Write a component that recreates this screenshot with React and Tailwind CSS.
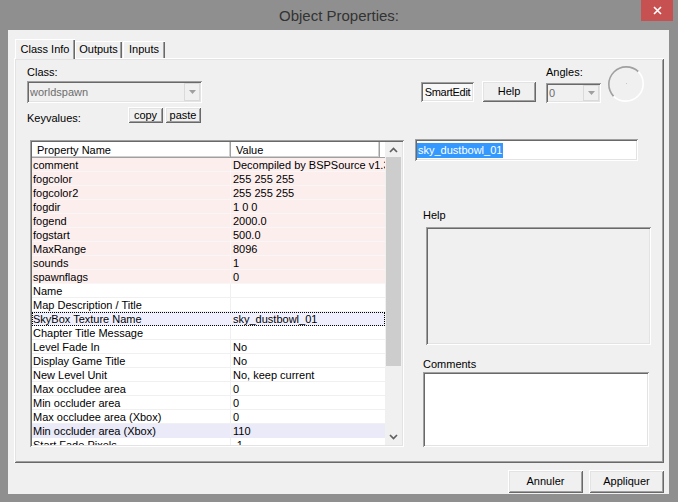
import React from 'react';

const raised = 'shadow-[inset_1px_1px_#ffffff,inset_-1px_-1px_#696969,inset_2px_2px_#e3e3e3,inset_-2px_-2px_#a0a0a0]';
const sunken = 'shadow-[inset_1px_1px_#a0a0a0,inset_-1px_-1px_#ffffff,inset_2px_2px_#696969,inset_-2px_-2px_#e3e3e3]';

const rows = [
  { name: 'comment', value: 'Decompiled by BSPSource v1.3', tint: 'pink' },
  { name: 'fogcolor', value: '255 255 255', tint: 'pink' },
  { name: 'fogcolor2', value: '255 255 255', tint: 'pink' },
  { name: 'fogdir', value: '1 0 0', tint: 'pink' },
  { name: 'fogend', value: '2000.0', tint: 'pink' },
  { name: 'fogstart', value: '500.0', tint: 'pink' },
  { name: 'MaxRange', value: '8096', tint: 'pink' },
  { name: 'sounds', value: '1', tint: 'pink' },
  { name: 'spawnflags', value: '0', tint: 'pink' },
  { name: 'Name', value: '' },
  { name: 'Map Description / Title', value: '' },
  { name: 'SkyBox Texture Name', value: 'sky_dustbowl_01', tint: 'selected' },
  { name: 'Chapter Title Message', value: '' },
  { name: 'Level Fade In', value: 'No' },
  { name: 'Display Game Title', value: 'No' },
  { name: 'New Level Unit', value: 'No, keep current' },
  { name: 'Max occludee area', value: '0' },
  { name: 'Min occluder area', value: '0' },
  { name: 'Max occludee area (Xbox)', value: '0' },
  { name: 'Min occluder area (Xbox)', value: '110', tint: 'hover' },
  { name: 'Start Fade Pixels', value: '-1' },
];

const rowBg = {
  pink: 'bg-[#fdeeee] border-[#f8f6f6]',
  selected: 'bg-[#eeeefc] border-[#eeeefc] outline-1 outline-dotted outline-black -outline-offset-1',
  hover: 'bg-[#eaeaf8] border-[#eaeaf8]',
};

const DropArrow = ({ color = '#a0a0a0' }) => (
  <svg width="7" height="4" viewBox="0 0 7 4">
    <path d="M0 0 L7 0 L3.5 4 Z" fill={color} />
  </svg>
);

const Chevron = ({ up }) => (
  <svg width="9" height="6" viewBox="0 0 9 6">
    <polyline
      points={up ? '1,5 4.5,1.5 8,5' : '1,1 4.5,4.5 8,1'}
      fill="none"
      stroke="#606060"
      strokeWidth="1.7"
    />
  </svg>
);

const Combo = ({ text, width }) => (
  <div className={`${width} h-full bg-[#f0f0f0] ${sunken} flex items-center`}>
    <span className="pl-[3px] text-[#6d6d6d]">{text}</span>
    <div className="ml-auto mr-[2px] w-[16px] h-[calc(100%-4px)] bg-[#f0f0f0] border border-[#dadada] flex items-center justify-center">
      <DropArrow />
    </div>
  </div>
);

const Dial = () => (
  <svg width="38" height="38" viewBox="0 0 38 38">
    <path d="M6.63 31.37 A17.5 17.5 0 0 1 31.37 6.63" fill="none" stroke="#a0a0a0" strokeWidth="1.6" />
    <path d="M31.37 6.63 A17.5 17.5 0 0 1 6.63 31.37" fill="none" stroke="#ffffff" strokeWidth="1.6" />
    <rect x="19" y="18" width="1" height="1" fill="#c8c8c8" />
  </svg>
);

const PropertyList = () => (
  <div className={`ml-[3px] mt-[17px] w-[374px] h-[307px] bg-white ${sunken} p-[2px]`}>
    <div className="flex h-full overflow-hidden">
      <div className="w-[353px] flex flex-col overflow-hidden">
        <div className="flex h-[16px] shrink-0">
          <div className="w-[199px] pl-[5px] flex items-center bg-white shadow-[inset_-1px_-1px_#a0a0a0,inset_-2px_-2px_#d0d0d0]">
            Property Name
          </div>
          <div className="w-[149px] pl-[5px] flex items-center bg-white shadow-[inset_-1px_-1px_#a0a0a0,inset_-2px_-2px_#d0d0d0]">
            Value
          </div>
          <div className="flex-1 bg-white shadow-[inset_0_-1px_#a0a0a0]" />
        </div>
        <div className="flex flex-col">
          {rows.map((r) => (
            <div
              key={r.name}
              className={`flex h-[14px] shrink-0 border-b ${r.tint ? rowBg[r.tint] : 'bg-white border-[#f0f0f0]'}`}
            >
              <div className={`w-[199px] pl-[1px] leading-[13px] whitespace-nowrap overflow-hidden border-r ${r.tint === 'pink' ? 'border-[#f8f6f6]' : 'border-[#f0f0f0]'}`}>
                <span className="relative top-[1px]">{r.name}</span>
              </div>
              <div className="flex-1 pl-[2px] leading-[13px] whitespace-nowrap overflow-hidden">
                <span className="relative top-[1px]">{r.value}</span>
              </div>
            </div>
          ))}
        </div>
      </div>
      <div className="w-[17px] flex flex-col bg-[#f0f0f0]">
        <div className="h-[15px] flex items-center justify-center shrink-0">
          <Chevron up />
        </div>
        <div className="mx-auto w-[15px] h-[209px] bg-[#cdcdcd] shrink-0" />
        <div className="flex-1" />
        <div className="h-[17px] flex items-center justify-center shrink-0">
          <Chevron />
        </div>
      </div>
    </div>
  </div>
);

export default function App() {
  return (
    <div className="w-[678px] h-[502px] bg-[#8f8f8f] flex flex-col font-['Liberation_Sans',Arial,sans-serif] text-[11px] text-black overflow-hidden">
      {/* title bar */}
      <div className="relative h-[30px] shrink-0 flex items-center justify-center">
        <span className="text-[15px] text-[#333333] mt-[2px]">Object Properties:</span>
        <div className="absolute right-[5px] top-0 w-[32px] h-[21px] bg-[#c75050] flex items-center justify-center">
          <svg width="9" height="9" viewBox="0 0 9 9">
            <path d="M1 1 L8 8 M8 1 L1 8" stroke="#ffffff" strokeWidth="1.6" />
          </svg>
        </div>
      </div>

      {/* client area */}
      <div className="ml-[8px] w-[661px] h-[464px] bg-[#f0f0f0] flex flex-col">
        {/* tabs */}
        <div className="h-[28px] pl-[7px] flex items-end shrink-0">
          <div className="relative z-10 -mb-[1px] w-[60px] h-[20px] bg-[#f0f0f0] shadow-[inset_1px_1px_#ffffff,inset_-1px_0_#696969,inset_-2px_0_#a0a0a0] flex items-center justify-center">
            Class Info
          </div>
          <div className="w-[47px] h-[17px] shadow-[inset_1px_1px_#ffffff,inset_-1px_0_#696969,inset_-2px_0_#a0a0a0] flex items-center justify-center">
            Outputs
          </div>
          <div className="ml-[1px] w-[42px] h-[17px] shadow-[inset_1px_1px_#ffffff,inset_-1px_0_#696969,inset_-2px_0_#a0a0a0] flex items-center justify-center">
            Inputs
          </div>
        </div>

        {/* tab panel */}
        <div className={`ml-[6px] w-[650px] h-[405px] shrink-0 flex ${raised}`}>
          {/* left column */}
          <div className="ml-[13px] w-[375px] pt-[8px] flex flex-col">
            <div className="h-[12px] leading-[12px]">Class:</div>
            <div className="mt-[3px] h-[22px]">
              <Combo text="worldspawn" width="w-[175px]" />
            </div>
            <div className="mt-[4px] h-[16px] flex">
              <span className="w-[101px] self-end leading-[12px] -mb-[1px]">Keyvalues:</span>
              <div className={`w-[35px] h-[16px] bg-[#f0f0f0] ${raised} flex items-center justify-center`}>copy</div>
              <div className={`ml-[2px] w-[36px] h-[16px] bg-[#f0f0f0] ${raised} flex items-center justify-center`}>paste</div>
            </div>
            <PropertyList />
          </div>

          {/* right column */}
          <div className="ml-[13px] flex-1 pt-[7px] flex flex-col">
            <div className="h-[38px] flex items-start">
              <div className={`ml-[6px] mt-[17px] w-[53px] h-[20px] bg-[#f8f8f8] ${sunken} flex items-center justify-center tracking-[-0.3px]`}>
                SmartEdit
              </div>
              <div className={`ml-[8px] mt-[16px] w-[54px] h-[21px] bg-[#f0f0f0] ${raised} flex items-center justify-center`}>
                Help
              </div>
              <div className="ml-[10px] flex flex-col">
                <div className="mt-[1px] h-[12px] leading-[12px]">Angles:</div>
                <div className="mt-[5px] h-[20px]">
                  <Combo text="0" width="w-[55px]" />
                </div>
              </div>
              <div className="ml-[6px]">
                <Dial />
              </div>
            </div>

            <div className={`mt-[36px] w-[223px] h-[22px] bg-white ${sunken} flex items-center pl-[2px]`}>
              <span className="bg-[#3399ff] text-white leading-[15px] px-[1px]">sky_dustbowl_01</span>
            </div>

            <div className="mt-[48px] ml-[8px] h-[12px] leading-[12px]">Help</div>
            <div className={`mt-[6px] ml-[11px] w-[225px] h-[118px] bg-[#f0f0f0] ${sunken}`} />

            <div className="mt-[13px] ml-[8px] h-[12px] leading-[12px]">Comments</div>
            <div className={`mt-[2px] ml-[8px] w-[226px] h-[75px] bg-white ${sunken}`} />
          </div>
        </div>

        {/* bottom buttons */}
        <div className="pt-[7px] pr-[5px] flex justify-end gap-[6px]">
          <div className={`w-[75px] h-[23px] bg-[#f0f0f0] ${raised} flex items-center justify-center`}>
            Annuler
          </div>
          <div className={`w-[75px] h-[23px] bg-[#f0f0f0] ${raised} flex items-center justify-center`}>
            Appliquer
          </div>
        </div>
      </div>
    </div>
  );
}
